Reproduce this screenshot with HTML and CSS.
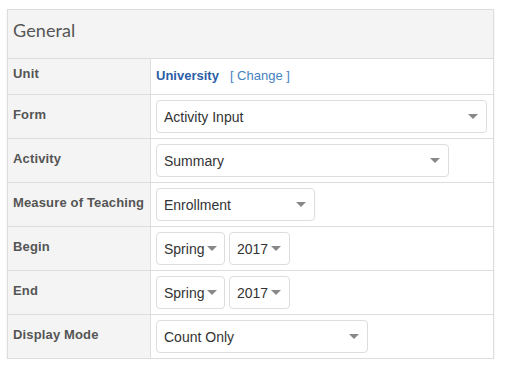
FILE: index.html
```html
<!DOCTYPE html>
<html>
<head>
<meta charset="utf-8">
<link rel="stylesheet" href="styles.css">
</head>
<body>
<div class="panel">
  <div class="panel-head">General</div>
  <table class="form-table">
    <tr class="row-unit">
      <th>Unit</th>
      <td><span class="unit">University</span><a class="change">[ Change ]</a></td>
    </tr>
    <tr>
      <th>Form</th>
      <td><div class="sel w-form"><span>Activity Input</span><i class="caret"></i></div></td>
    </tr>
    <tr>
      <th>Activity</th>
      <td><div class="sel w-act"><span>Summary</span><i class="caret"></i></div></td>
    </tr>
    <tr>
      <th>Measure of Teaching</th>
      <td><div class="sel w-enr"><span>Enrollment</span><i class="caret"></i></div></td>
    </tr>
    <tr>
      <th>Begin</th>
      <td><div class="pair"><div class="sel w-season"><span>Spring</span><i class="caret"></i></div><div class="sel w-year"><span>2017</span><i class="caret"></i></div></div></td>
    </tr>
    <tr>
      <th>End</th>
      <td><div class="pair"><div class="sel w-season"><span>Spring</span><i class="caret"></i></div><div class="sel w-year"><span>2017</span><i class="caret"></i></div></div></td>
    </tr>
    <tr>
      <th>Display Mode</th>
      <td><div class="sel w-mode"><span>Count Only</span><i class="caret"></i></div></td>
    </tr>
  </table>
</div>
</body>
</html>
```

FILE: styles.css
```css
html, body { margin: 0; padding: 0; background: #fff; }
body { padding: 9px 0 0 7px; font-family: "Liberation Sans", Arial, sans-serif; color: #333; }
.panel {
  width: 485px;
  border: 1px solid #ddd;
  box-shadow: 0 1px 2px rgba(0,0,0,0.08);
  background: #fff;
}
.panel-head {
  height: 48px;
  background: #f4f4f4;
  font-family: Lato, "Open Sans", sans-serif;
  font-size: 18px;
  letter-spacing: 0.1px;
  color: #555;
  line-height: 40px;
  padding-left: 5px;
}
.form-table {
  width: 100%;
  border-collapse: collapse;
}
.form-table th, .form-table td {
  border-top: 1px solid #ddd;
  padding: 5px 0;
  height: 33px;
  box-sizing: content-box;
  vertical-align: top;
}
.form-table th {
  width: 137px;
  background: #f4f4f4;
  border-right: 1px solid #ddd;
  text-align: left;
  font-weight: bold;
  font-size: 13px;
  letter-spacing: 0.15px;
  color: #555;
  padding-left: 5px;
  line-height: 30px;
}
.form-table td { padding-left: 5px; }
.row-unit th, .row-unit td { height: 25px; }
.row-unit th { line-height: 20px; padding-top: 5px; }
.row-unit td { line-height: 25px; padding-top: 4px; font-size: 13px; }
.unit { color: #2b5ea6; font-weight: bold; }
.change { color: #4482c2; margin-left: 11px; }
.sel {
  height: 31px;
  border: 1px solid #ddd;
  border-radius: 4px;
  display: flex;
  align-items: center;
  justify-content: space-between;
  padding: 0 8px 0 7px;
  font-size: 14px;
  color: #333;
  background: #fff;
  box-sizing: content-box;
}
.caret {
  width: 0; height: 0;
  border-left: 5px solid transparent;
  border-right: 5px solid transparent;
  border-top: 5px solid #888;
  flex: none;
}
.w-form { width: 314px; }
.w-act { width: 276px; }
.w-enr { width: 142px; }
.w-mode { width: 195px; }
.pair { display: flex; gap: 4px; }
.w-season { width: 53px; padding-right: 7px; padding-left: 7px; }
.w-year { width: 45px; padding-right: 7px; padding-left: 7px; }
.w-season, .w-year { justify-content: flex-start; gap: 3px; }
```
